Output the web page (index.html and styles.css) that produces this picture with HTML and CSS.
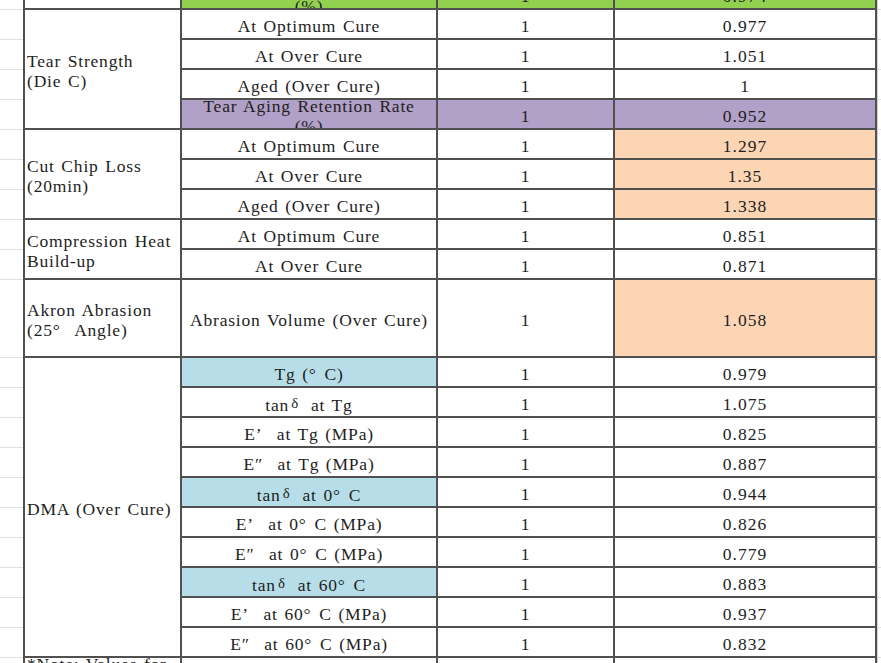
FILE: index.html
```html
<!DOCTYPE html>
<html>
<head>
<meta charset="utf-8">
<link rel="stylesheet" href="styles.css">
</head>
<body>
<div class="viewport">
  <div class="sheet">
    <!-- previous group, last row -->
    <div class="g"></div>
    <div class="c c1"></div>
    <div class="c c2 green"><span>Tensile Aging Retention Rate<br>(%)</span></div>
    <div class="c c3 green">1</div>
    <div class="c c4 green">0.974</div>
    <div class="g gr"></div>

    <!-- Tear Strength -->
    <div class="g"></div>
    <div class="c c1 span4"><span>Tear Strength<br>(Die C)</span></div>
    <div class="c c2">At Optimum Cure</div>
    <div class="c c3">1</div>
    <div class="c c4">0.977</div>
    <div class="g gr"></div>

    <div class="g"></div>
    <div class="c c2">At Over Cure</div>
    <div class="c c3">1</div>
    <div class="c c4">1.051</div>
    <div class="g gr"></div>

    <div class="g"></div>
    <div class="c c2">Aged (Over Cure)</div>
    <div class="c c3">1</div>
    <div class="c c4">1</div>
    <div class="g gr"></div>

    <div class="g"></div>
    <div class="c c2 purple"><span>Tear Aging Retention Rate<br>(%)</span></div>
    <div class="c c3 purple">1</div>
    <div class="c c4 purple">0.952</div>
    <div class="g gr"></div>

    <!-- Cut Chip Loss -->
    <div class="g"></div>
    <div class="c c1 span3"><span>Cut Chip Loss<br>(20min)</span></div>
    <div class="c c2">At Optimum Cure</div>
    <div class="c c3">1</div>
    <div class="c c4 peach">1.297</div>
    <div class="g gr"></div>

    <div class="g"></div>
    <div class="c c2">At Over Cure</div>
    <div class="c c3">1</div>
    <div class="c c4 peach">1.35</div>
    <div class="g gr"></div>

    <div class="g"></div>
    <div class="c c2">Aged (Over Cure)</div>
    <div class="c c3">1</div>
    <div class="c c4 peach">1.338</div>
    <div class="g gr"></div>

    <!-- Compression Heat Build-up -->
    <div class="g"></div>
    <div class="c c1 span2"><span>Compression Heat<br>Build-up</span></div>
    <div class="c c2">At Optimum Cure</div>
    <div class="c c3">1</div>
    <div class="c c4">0.851</div>
    <div class="g gr"></div>

    <div class="g"></div>
    <div class="c c2">At Over Cure</div>
    <div class="c c3">1</div>
    <div class="c c4">0.871</div>
    <div class="g gr"></div>

    <!-- Akron Abrasion -->
    <div class="g"></div>
    <div class="c c1"><span>Akron Abrasion<br>(25<span class="fw">°</span> Angle)</span></div>
    <div class="c c2">Abrasion Volume (Over Cure)</div>
    <div class="c c3">1</div>
    <div class="c c4 peach">1.058</div>
    <div class="g gr"></div>

    <!-- DMA -->
    <div class="g"></div>
    <div class="c c1 span10"><span>DMA (Over Cure)</span></div>
    <div class="c c2 blue"><span>Tg (<span class="fw">°</span>C)</span></div>
    <div class="c c3">1</div>
    <div class="c c4">0.979</div>
    <div class="g gr"></div>

    <div class="g"></div>
    <div class="c c2"><span>tan<span class="dl">δ</span> at Tg</span></div>
    <div class="c c3">1</div>
    <div class="c c4">1.075</div>
    <div class="g gr"></div>

    <div class="g"></div>
    <div class="c c2"><span>E<span class="fw">’</span> at Tg (MPa)</span></div>
    <div class="c c3">1</div>
    <div class="c c4">0.825</div>
    <div class="g gr"></div>

    <div class="g"></div>
    <div class="c c2"><span>E<span class="fw">″</span> at Tg (MPa)</span></div>
    <div class="c c3">1</div>
    <div class="c c4">0.887</div>
    <div class="g gr"></div>

    <div class="g"></div>
    <div class="c c2 blue"><span>tan<span class="dl">δ</span> at 0<span class="fw">°</span>C</span></div>
    <div class="c c3">1</div>
    <div class="c c4">0.944</div>
    <div class="g gr"></div>

    <div class="g"></div>
    <div class="c c2"><span>E<span class="fw">’</span> at 0<span class="fw">°</span>C (MPa)</span></div>
    <div class="c c3">1</div>
    <div class="c c4">0.826</div>
    <div class="g gr"></div>

    <div class="g"></div>
    <div class="c c2"><span>E<span class="fw">″</span> at 0<span class="fw">°</span>C (MPa)</span></div>
    <div class="c c3">1</div>
    <div class="c c4">0.779</div>
    <div class="g gr"></div>

    <div class="g"></div>
    <div class="c c2 blue"><span>tan<span class="dl">δ</span> at 60<span class="fw">°</span>C</span></div>
    <div class="c c3">1</div>
    <div class="c c4">0.883</div>
    <div class="g gr"></div>

    <div class="g"></div>
    <div class="c c2"><span>E<span class="fw">’</span> at 60<span class="fw">°</span>C (MPa)</span></div>
    <div class="c c3">1</div>
    <div class="c c4">0.937</div>
    <div class="g gr"></div>

    <div class="g"></div>
    <div class="c c2"><span>E<span class="fw">″</span> at 60<span class="fw">°</span>C (MPa)</span></div>
    <div class="c c3">1</div>
    <div class="c c4">0.832</div>
    <div class="g gr"></div>

    <!-- Note -->
    <div class="g"></div>
    <div class="c c1 note"><span>*Note: Values for reference compound are normalized to 1.</span></div>
    <div class="c c2"></div>
    <div class="c c3"></div>
    <div class="c c4"></div>
    <div class="g gr"></div>
  </div>
</div>
</body>
</html>
```

FILE: styles.css
```css
html, body {
  margin: 0;
  padding: 0;
  background: #ffffff;
}

.viewport {
  width: 881px;
  height: 663px;
  overflow: hidden;
}

.sheet {
  display: grid;
  grid-template-columns: 23px 159px 256px 177px 262px 4px;
  grid-template-rows: repeat(10, 30px) 78px repeat(10, 30px) 60px;
  margin-top: -20px;
  font-family: "Liberation Serif", "Noto Sans CJK SC", serif;
  font-size: 17.5px;
  line-height: 20px;
  letter-spacing: 0.8px;
  word-spacing: 1.5px;
  color: #1e1e1e;
}

.c {
  box-sizing: border-box;
  border-right: 2px solid #505050;
  border-bottom: 2px solid #505050;
  overflow: hidden;
  display: flex;
  align-items: center;
  justify-content: center;
  text-align: center;
  padding: 4px 2px 0;
  white-space: nowrap;
}

.c4 {
  letter-spacing: 1px;
}

.c1 {
  border-left: 2px solid #505050;
  justify-content: flex-start;
  text-align: left;
  padding-left: 2px;
  padding-right: 2px;
  white-space: normal;
}

.span2 { grid-row: span 2; }
.span3 { grid-row: span 3; }
.span4 { grid-row: span 4; }
.span10 { grid-row: span 10; }

.g {
  box-sizing: border-box;
  border-bottom: 1px solid #e0e0e0;
}

.gr {
  border-left: 1px solid #d2d2d2;
}

.green { background: #92d050; }
.purple { background: #b1a0c7; }
.peach { background: #fcd5b4; }
.blue { background: #b7dee8; }

.fw {
  margin-right: 0.45em;
}

.dl {
  margin-left: 0.15em;
  margin-right: 0.35em;
  font-size: 0.85em;
  vertical-align: 0.2em;
}

.note {
  align-items: flex-start;
  padding-top: 0;
  line-height: 17px;
}

.note span {
  margin-top: -2px;
}
```
